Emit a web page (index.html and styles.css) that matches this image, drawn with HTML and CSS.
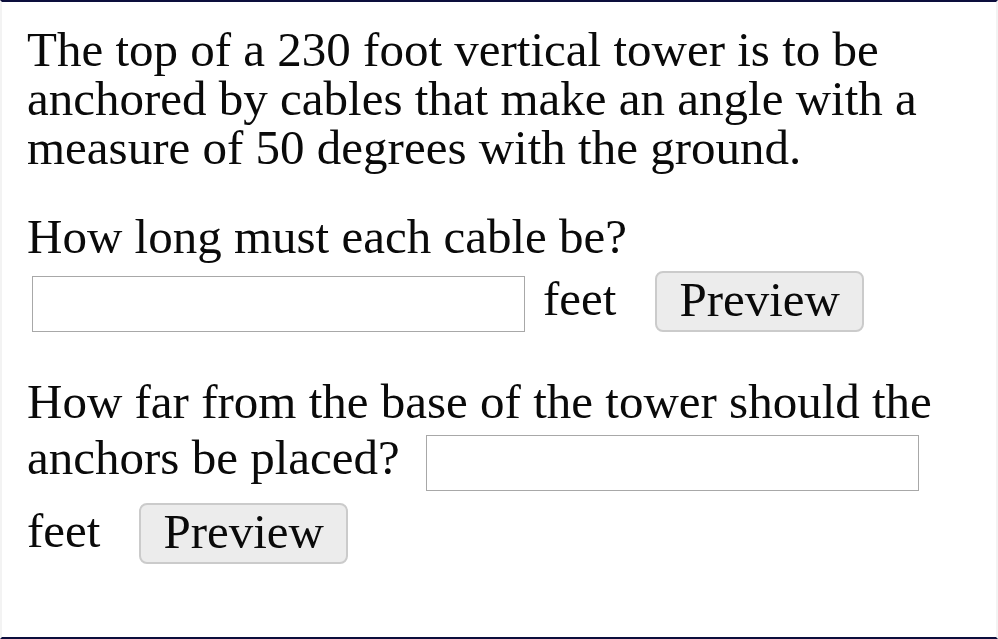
FILE: index.html
```html
<!DOCTYPE html>
<html lang="en">
<head>
<meta charset="utf-8">
<title>Tower cable problem</title>
<link rel="stylesheet" href="styles.css">
</head>
<body>
<main class="page">
  <p class="stem">The top of a 230 foot vertical tower is to be anchored by cables that make an angle with a measure of 50 degrees with the ground.</p>

  <p class="question q1">How long must each cable be?</p>
  <div class="answer-row">
    <input class="answer-box first-box" type="text" aria-label="Cable length">
    <span class="unit unit-after-box">feet</span>
    <button class="preview" type="button">Preview</button>
  </div>

  <p class="question q2">How far from the base of the tower should the anchors be placed? <input class="answer-box inline-box" type="text" aria-label="Anchor distance"></p>
  <div class="answer-row row2">
    <span class="unit">feet</span>
    <button class="preview" type="button">Preview</button>
  </div>
</main>
</body>
</html>
```

FILE: styles.css
```css
html, body {
  margin: 0;
  padding: 0;
}

body {
  box-sizing: border-box;
  height: 639px;
  background: #ffffff;
  border-top: 2px solid #0c0e3c;
  border-bottom: 2px solid #0c0e3c;
  border-left: 2px solid #f3f3f3;
  border-right: 2px solid #f3f3f3;
  color: #0a0a0a;
  font-family: "Liberation Serif", "Times New Roman", serif;
  font-size: 49px;
  line-height: 49px;
  overflow: hidden;
}

.page {
  padding: 23px 28px 0 25px;
}

.stem {
  margin: 0;
}

.question {
  margin: 0;
}

.q1 {
  margin-top: 40px;
}

.answer-row {
  display: flex;
  align-items: center;
  margin-top: 10px;
}

.answer-box {
  box-sizing: border-box;
  width: 493px;
  height: 56px;
  border: 1px solid #a8a8a8;
  border-radius: 0;
  background: #ffffff;
  padding: 0 6px;
  font: inherit;
  outline: none;
}

.first-box {
  margin-left: 5px;
  margin-top: 4px;
}

.unit {
  padding-bottom: 6px;
}

.unit-after-box {
  margin-left: 18px;
}

.preview {
  box-sizing: border-box;
  height: 61px;
  margin-left: 39px;
  padding: 0 22px 5px;
  border: 2px solid #cbcbcb;
  border-radius: 8px;
  background: #ececec;
  color: #0a0a0a;
  font: inherit;
  line-height: 1;
}

.q2 {
  margin-top: 45px;
}

.inline-box {
  vertical-align: middle;
  margin: 9px 0 9px 14px;
}

.row2 {
  margin-top: 3px;
}
```
